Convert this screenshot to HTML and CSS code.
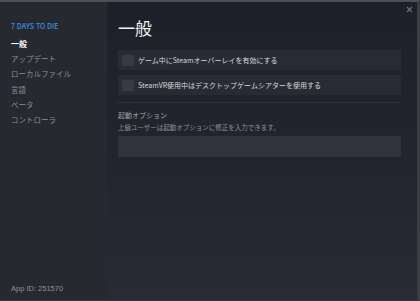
FILE: index.html
```html
<!DOCTYPE html>
<html lang="ja">
<head>
<meta charset="utf-8">
<link rel="stylesheet" href="styles.css">
</head>
<body>
<div class="window">
  <aside class="sidebar">
    <div class="game">7 DAYS TO DIE</div>
    <nav class="menu">
      <div class="item active">一般</div>
      <div class="item">アップデート</div>
      <div class="item">ローカルファイル</div>
      <div class="item">言語</div>
      <div class="item">ベータ</div>
      <div class="item">コントローラ</div>
    </nav>
    <div class="appid">App ID: 251570</div>
  </aside>
  <main class="main">
    <div class="close">
      <svg width="7" height="7" viewBox="0 0 7 7"><path d="M1 1L6 6M6 1L1 6" stroke="#6b6e75" stroke-width="1.2"/></svg>
    </div>
    <h1 class="title">一般</h1>
    <div class="row"><span class="check"></span><span class="label">ゲーム中にSteamオーバーレイを有効にする</span></div>
    <div class="row"><span class="check"></span><span class="label">SteamVR使用中はデスクトップゲームシアターを使用する</span></div>
    <div class="sep"></div>
    <div class="opt-title">起動オプション</div>
    <div class="opt-desc">上級ユーザーは起動オプションに修正を入力できます。</div>
    <div class="input"></div>
  </main>
</div>
</body>
</html>
```

FILE: styles.css
```css
* { box-sizing: border-box; margin: 0; padding: 0; }
html, body { width: 420px; height: 301px; overflow: hidden; background: #1f2229; }
body { font-family: "Noto Sans CJK JP", "Noto Sans", sans-serif; }
.window {
  display: flex;
  width: 420px;
  height: 301px;
  border-top: 2px solid #4d5057;
  border-right: 3px solid #3a3d44;
  border-bottom: 1px solid #34373e;
}
.sidebar {
  width: 107px;
  flex: none;
  background: #262930;
  display: flex;
  flex-direction: column;
  padding: 19px 0 0 11px;
}
.game {
  color: #3d8fe0;
  font-size: 7px;
  font-weight: 500;
  line-height: 10px;
  letter-spacing: 0.1px;
}
.menu { margin-top: 5px; display: flex; flex-direction: column; }
.item {
  color: #8a8e96;
  font-size: 7.5px;
  line-height: 15.2px;
}
.item.active { color: #ffffff; font-weight: 700; font-size: 8px; }
.appid {
  margin-top: auto;
  margin-bottom: 6px;
  color: #8d9199;
  font-family: "Liberation Sans", sans-serif;
  font-size: 7.5px;
  line-height: 10px;
}
.main {
  flex: 1;
  position: relative;
  background: linear-gradient(180deg, #1d2028 0%, #23262e 60%, #282b33 100%);
  padding: 14px 16px 0 11px;
}
.close { position: absolute; top: 4px; right: 4px; width: 7px; height: 7px; line-height: 0; }
.title {
  color: #eeeff1;
  font-size: 17px;
  font-weight: 400;
  line-height: 24px;
  margin-bottom: 10px;
}
.row {
  height: 20px;
  background: #282b33;
  display: flex;
  align-items: center;
  padding-left: 4px;
  margin-bottom: 5px;
}
.check {
  width: 12px;
  height: 11px;
  background: #373a42;
  flex: none;
  margin-right: 4px;
}
.label {
  color: #d6d8dc;
  font-size: 7px;
  line-height: 10px;
}
.sep { height: 1px; background: #30333a; margin-top: 7px; }
.opt-title {
  margin-top: 7px;
  color: #a2a5ab;
  font-size: 7px;
  line-height: 10px;
}
.opt-desc {
  margin-top: 2px;
  color: #8f9299;
  font-size: 6.5px;
  line-height: 10px;
}
.input {
  margin-top: 4px;
  height: 21px;
  background: #30333b;
}
```
